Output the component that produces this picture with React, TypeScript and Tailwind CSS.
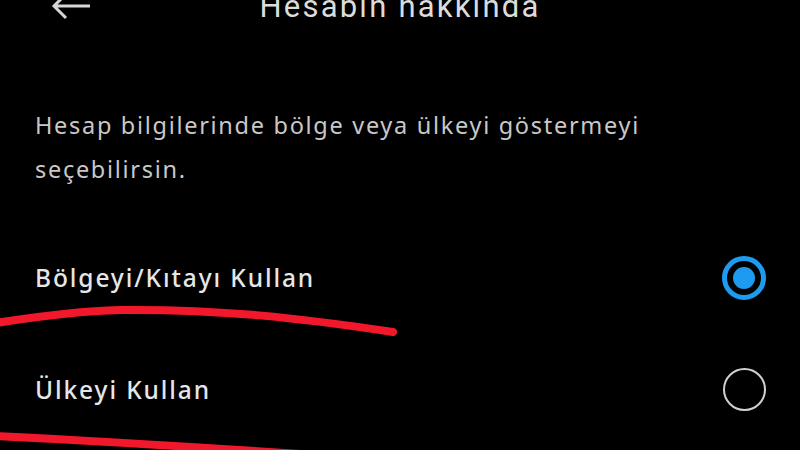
import React, { useState } from 'react';

type Option = { id: string; label: string };

const OPTIONS: Option[] = [
  { id: 'region', label: 'Bölgeyi/Kıtayı Kullan' },
  { id: 'country', label: 'Ülkeyi Kullan' },
];

const Radio: React.FC<{ checked: boolean }> = ({ checked }) =>
  checked ? (
    <span className="w-[44px] h-[44px] rounded-full border-[5px] border-[#1d9bf0] flex items-center justify-center">
      <span className="w-[22px] h-[22px] rounded-full bg-[#1d9bf0]" />
    </span>
  ) : (
    <span className="w-[43px] h-[43px] rounded-full border-2 border-[#d0d0d0]" />
  );

const App: React.FC = () => {
  const [selected, setSelected] = useState('region');

  return (
    <div className="relative w-[800px] h-[450px] overflow-hidden bg-black text-[#e7e7e7]" style={{ fontFamily: '"Noto Sans", sans-serif' }}>
      {/* top bar */}
      <header className="relative h-[31px] -mt-[9px] flex items-center justify-center">
        <svg className="absolute left-[50px] top-[1px]" width="42" height="28" viewBox="0 0 42 28" fill="none" stroke="#d6d6d6" strokeWidth="3">
          <path d="M4 14h36M16 2 4 14l12 12" />
        </svg>
        <h1 className="text-[31px] leading-[31px] tracking-[2.2px] text-[#dcdcdc]" style={{ fontFamily: 'Roboto, sans-serif' }}>
          Hesabın hakkında
        </h1>
      </header>

      <p className="mt-[81px] px-[35px] text-[23.5px] leading-[44px] text-[#c8c8c8] tracking-[1.7px]">
        Hesap bilgilerinde bölge veya ülkeyi göstermeyi
        <br />
        seçebilirsin.
      </p>

      <ul className="mt-[65px]">
        {OPTIONS.map((o) => (
          <li
            key={o.id}
            onClick={() => setSelected(o.id)}
            className="h-[112px] pl-[35px] pr-[34px] flex items-start justify-between cursor-pointer"
          >
            <span className="text-[24.5px] leading-[44px] font-medium tracking-[1.9px] text-[#e6e6e6]">{o.label}</span>
            <Radio checked={selected === o.id} />
          </li>
        ))}
      </ul>

      {/* red marker strokes */}
      <svg className="absolute inset-0 pointer-events-none" width="800" height="450" viewBox="0 0 800 450" fill="none" stroke="#f2182c" strokeWidth="8" strokeLinecap="round">
        <path d="M-4 323 C40 316 80 311 120 310 C220 309 300 318 393 332" />
        <path d="M-4 436 C80 440 180 446 300 454" />
      </svg>
    </div>
  );
};

export default App;
